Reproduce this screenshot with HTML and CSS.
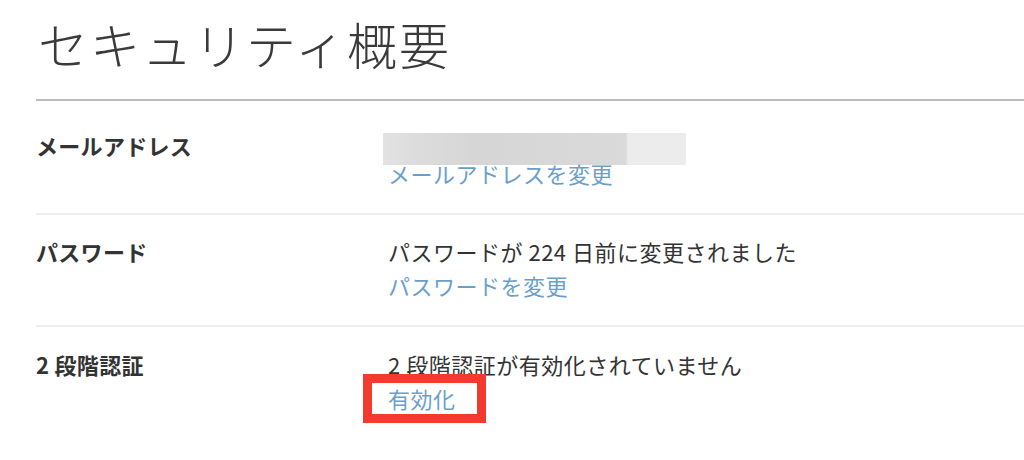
FILE: index.html
```html
<!DOCTYPE html>
<html lang="ja">
<head>
<meta charset="utf-8">
<link rel="stylesheet" href="styles.css">
</head>
<body>
<div class="page">
  <h1 class="title">セキュリティ概要</h1>
  <div class="list">
    <div class="row row-first">
      <div class="label">メールアドレス</div>
      <div class="value">
        <div class="masked"></div>
        <a class="link">メールアドレスを変更</a>
      </div>
    </div>
    <div class="row">
      <div class="label">パスワード</div>
      <div class="value">
        <div class="text">パスワードが 224 日前に変更されました</div>
        <a class="link">パスワードを変更</a>
      </div>
    </div>
    <div class="row row-last">
      <div class="label">2 段階認証</div>
      <div class="value">
        <div class="text">2 段階認証が有効化されていません</div>
        <a class="link highlight">有効化</a>
      </div>
    </div>
  </div>
</div>
</body>
</html>
```
FILE: styles.css
```css
html, body {
  margin: 0;
  padding: 0;
  background: #ffffff;
}
body {
  font-family: "Noto Sans CJK JP", "Liberation Sans", sans-serif;
  color: #333333;
}
.page {
  padding-left: 36px;
  overflow: hidden;
  height: 460px;
}
.title {
  margin: 13px 0 0 0;
  padding: 0 0 26px 2px;
  font-size: 50px;
  line-height: 60px;
  font-weight: 300;
  letter-spacing: 2px;
  color: #3a3a3a;
  border-bottom: 2px solid #bdbdbd;
}
.list {
  display: flex;
  flex-direction: column;
}
.row {
  display: grid;
  grid-template-columns: 352px 1fr;
  padding: 19px 0 23px 0;
  border-bottom: 2px solid #ececec;
}
.row-first {
  padding-top: 27px;
}
.row-last {
  border-bottom: none;
  padding-top: 20px;
}
.label {
  font-size: 22px;
  line-height: 34px;
  font-weight: 700;
  letter-spacing: 0.3px;
  color: #333333;
}
.value {
  display: flex;
  flex-direction: column;
  align-items: flex-start;
  font-size: 22px;
  line-height: 34px;
  letter-spacing: 0.5px;
}
.text {
  color: #333333;
}
.masked {
  width: 303px;
  height: 32px;
  margin: 5px 0 -9px -5px;
  background: linear-gradient(90deg, #e3e3e3 0%, #dcdcdc 10%, #d6d6d6 30%, #d8d8d8 60%, #dadada 80%, #ececec 81%, #ececec 100%);
}
.link {
  color: #6a9fcc;
  text-decoration: none;
  cursor: pointer;
}
.highlight {
  margin: -7px 0 0 -25px;
  padding: 0 21px 0 16px;
  border: 9px solid #f23a2e;
  line-height: 31px;
}
```
